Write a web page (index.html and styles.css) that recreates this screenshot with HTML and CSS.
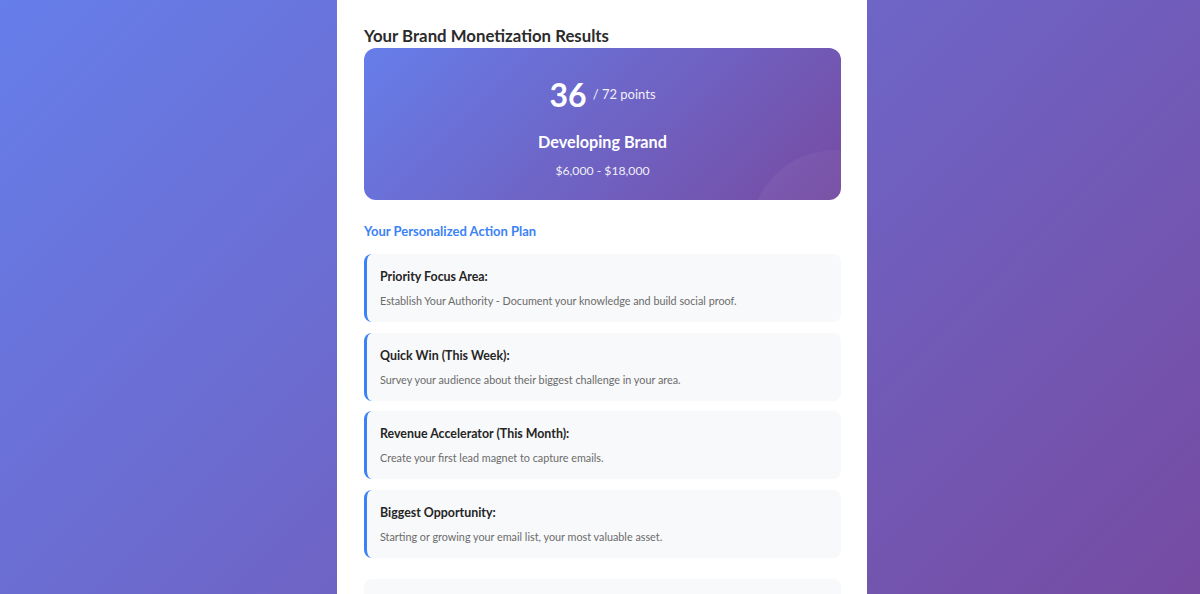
FILE: index.html
```html
<!DOCTYPE html>
<html lang="en">
<head>
  <meta charset="UTF-8" />
  <meta name="viewport" content="width=device-width, initial-scale=1" />
  <title>Brand Monetization Results</title>
  <link rel="stylesheet" href="styles.css">
</head>
<body>

  <div class="container">
    <h2 class="results-title">Your Brand Monetization Results</h2>

    <div class="score-card">
      <div class="score">
        <span class="score-number">36</span>
        <span class="score-max">/ 72 points</span>
      </div>
      <div class="score-level">Developing Brand</div>
      <div class="score-range">$6,000 - $18,000</div>
    </div>

    <h3 class="plan-title">Your Personalized Action Plan</h3>

    <ul class="plan-list">
      <li class="plan-item">
        <div class="plan-label">Priority Focus Area:</div>
        <div class="plan-text">Establish Your Authority - Document your knowledge and build social proof.</div>
      </li>
      <li class="plan-item">
        <div class="plan-label">Quick Win (This Week):</div>
        <div class="plan-text">Survey your audience about their biggest challenge in your area.</div>
      </li>
      <li class="plan-item">
        <div class="plan-label">Revenue Accelerator (This Month):</div>
        <div class="plan-text">Create your first lead magnet to capture emails.</div>
      </li>
      <li class="plan-item">
        <div class="plan-label">Biggest Opportunity:</div>
        <div class="plan-text">Starting or growing your email list, your most valuable asset.</div>
      </li>
    </ul>

    <div class="next-box"></div>
  </div>

</body>
</html>
```

FILE: styles.css
```css
html,
body {
  height: 100%;
}
body {
  margin: 0;
  padding-left: 4px;
  font-family: Lato, "Open Sans", sans-serif;
  background: linear-gradient(135deg, #667eea 0%, #764ba2 100%);
  color: #2d2d2d;
  overflow: hidden;
}
.container {
  width: 530px;
  margin: 0 auto;
  min-height: 100%;
  box-sizing: border-box;
  background: white;
  padding: 26px 26px 0 27px;
}
.results-title {
  margin: 0 0 2px;
  font-size: 16.8px;
  font-weight: 700;
  line-height: 20px;
  color: #2b2b2b;
}
.score-card {
  position: relative;
  overflow: hidden;
  height: 152px;
  box-sizing: border-box;
  padding-top: 27px;
  border-radius: 12px;
  text-align: center;
  color: white;
  background: linear-gradient(135deg, #667eea 0%, #764ba2 100%);
}
.score-card::after {
  content: "";
  position: absolute;
  right: -79px;
  bottom: -120px;
  width: 170px;
  height: 170px;
  border-radius: 50%;
  background: rgba(255, 255, 255, 0.045);
}
.score {
  line-height: 38px;
}
.score-number {
  font-size: 32px;
  font-weight: 700;
}
.score-max {
  font-size: 13px;
  opacity: 0.9;
  vertical-align: 8px;
  margin-left: 2px;
}
.score-level {
  margin-top: 11px;
  font-size: 16.2px;
  font-weight: 700;
  line-height: 22px;
}
.score-range {
  margin-top: 9px;
  font-size: 12.2px;
  line-height: 18px;
  opacity: 0.9;
}
.plan-title {
  margin: 23px 0 14px;
  font-size: 13px;
  font-weight: 700;
  line-height: 17px;
  color: #3b82f6;
}
.plan-list {
  list-style: none;
  margin: 0;
  padding: 0;
}
.plan-item {
  height: 68px;
  box-sizing: border-box;
  margin-bottom: 10.7px;
  padding: 14px 14px 0 13px;
  background: #f8f9fa;
  border-left: 3px solid #3b82f6;
  border-radius: 8px;
}
.plan-label {
  font-size: 12.4px;
  font-weight: 700;
  line-height: 17px;
  color: #252525;
}
.plan-text {
  margin-top: 8px;
  font-size: 10.8px;
  line-height: 16px;
  color: #6b6b6b;
}
.next-box {
  margin-top: 21px;
  height: 60px;
  background: #f8f9fa;
  border-radius: 8px;
}
```
